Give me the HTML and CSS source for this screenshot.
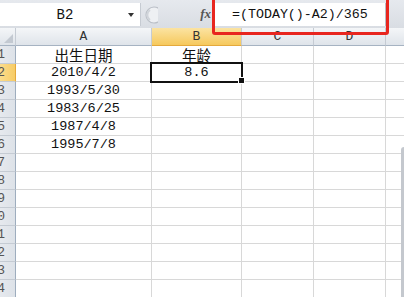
FILE: index.html
```html
<!DOCTYPE html>
<html>
<head>
<meta charset="UTF-8">
<title>年龄计算</title>
<link rel="stylesheet" href="styles.css">
</head>
<body>
<div class="app">
	<div class="fbar">
		<div class="namebox">
			<span class="ref">B2</span>
			<span class="dd"></span>
		</div>
		<div class="tools">
			<svg class="knob" width="14" height="20" viewBox="0 0 14 20">
				<circle cx="10" cy="10" r="8" fill="#eef0f3" stroke="#b9bec6" stroke-width="1.2"/>
				<path d="M6 5 A6 6 0 0 0 6 15" fill="none" stroke="#d0d4da" stroke-width="2"/>
			</svg>
			<span class="fx">fx</span>
		</div>
		<div class="finput">=(TODAY()-A2)/365</div>
		<div class="fend"></div>
	</div>

	<div class="sheet">
		<div class="corner"></div>
		<div class="ch">A</div>
		<div class="ch sel">B</div>
		<div class="ch">C</div>
		<div class="ch">D</div>
		<div class="ch last"></div>

		<div class="rh">1</div><div class="c cjk">出生日期</div><div class="c cjk">年龄</div><div class="c"></div><div class="c"></div><div class="c last"></div>
		<div class="rh sel">2</div><div class="c">2010/4/2</div><div class="c active">8.6<span class="handle"></span></div><div class="c"></div><div class="c"></div><div class="c last"></div>
		<div class="rh">3</div><div class="c">1993/5/30</div><div class="c"></div><div class="c"></div><div class="c"></div><div class="c last"></div>
		<div class="rh">4</div><div class="c">1983/6/25</div><div class="c"></div><div class="c"></div><div class="c"></div><div class="c last"></div>
		<div class="rh">5</div><div class="c">1987/4/8</div><div class="c"></div><div class="c"></div><div class="c"></div><div class="c last"></div>
		<div class="rh">6</div><div class="c">1995/7/8</div><div class="c"></div><div class="c"></div><div class="c"></div><div class="c last"></div>
		<div class="rh">7</div><div class="c"></div><div class="c"></div><div class="c"></div><div class="c"></div><div class="c last"></div>
		<div class="rh">8</div><div class="c"></div><div class="c"></div><div class="c"></div><div class="c"></div><div class="c last"></div>
		<div class="rh">9</div><div class="c"></div><div class="c"></div><div class="c"></div><div class="c"></div><div class="c last"></div>
		<div class="rh">10</div><div class="c"></div><div class="c"></div><div class="c"></div><div class="c"></div><div class="c last"></div>
		<div class="rh">11</div><div class="c"></div><div class="c"></div><div class="c"></div><div class="c"></div><div class="c last"></div>
		<div class="rh">12</div><div class="c"></div><div class="c"></div><div class="c"></div><div class="c"></div><div class="c last"></div>
		<div class="rh">13</div><div class="c"></div><div class="c"></div><div class="c"></div><div class="c"></div><div class="c last"></div>
		<div class="rh">14</div><div class="c"></div><div class="c"></div><div class="c"></div><div class="c"></div><div class="c last"></div>
	</div>

	<div class="callout"></div>
	<div class="vscroll"></div>
</div>
</body>
</html>
```

FILE: styles.css
```css
html, body{
	margin:0;
	padding:0;
	background:#fff;
	overflow:hidden;
}

.app{
	position:relative;
	width:404px;
	height:297px;
	overflow:hidden;
	font:13.5px "Liberation Mono", "DejaVu Sans Mono", monospace;
	color:#111;
}

/* barre de formule */
.fbar{
	display:flex;
	height:28px;
	box-sizing:border-box;
	padding:3px 0 2px 0;
	background:linear-gradient(to bottom, #e6e9ee, #d9dde3);
}

.namebox{
	width:141px;
	display:flex;
	align-items:center;
	background:#fff;
	box-sizing:border-box;
	border-right:1px solid #c6cbd2;
}
.namebox .ref{
	flex:1;
	text-align:center;
	padding-left:2px;
	font:14px "Liberation Mono", monospace;
	color:#111;
}
.namebox .dd{
	width:0;
	height:0;
	margin-right:6px;
	border-left:3.5px solid transparent;
	border-right:3.5px solid transparent;
	border-top:4px solid #333;
}

.tools{
	width:74px;
	display:flex;
	align-items:center;
	justify-content:space-between;
	padding:0 4px 0 3px;
	box-sizing:border-box;
}
.knob{
	display:block;
}
.fx{
	font:italic bold 13px "Liberation Serif", serif;
	color:#555;
	padding-bottom:1px;
}

.finput{
	width:171px;
	background:#fff;
	box-sizing:border-box;
	padding-left:17px;
	line-height:23px;
	font-size:13.3px;
	color:#111;
	border-right:1px solid #b8bec6;
}
.fend{
	flex:1;
}

/* feuille */
.sheet{
	display:grid;
	grid-template-columns:16px 136px 90px 72px 72px 1fr;
	grid-auto-rows:18px;
}

.corner, .ch{
	box-sizing:border-box;
	border-right:1px solid #c5cbd3;
	border-bottom:1px solid #a6b3c2;
	background:linear-gradient(to bottom, #f4f6f8, #dfe4ea);
}
.corner{
	position:relative;
}
.corner::after{
	content:"";
	position:absolute;
	right:2px;
	bottom:2px;
	border-left:9px solid transparent;
	border-bottom:9px solid #c3c9d1;
}
.ch{
	text-align:center;
	font-size:13px;
	line-height:18px;
	color:#333;
}
.ch.sel{
	background:linear-gradient(to bottom, #fbe3a2, #f6c95d);
	border-bottom-color:#e4a93c;
}
.ch.last, .c.last{
	border-right:none;
}

.rh{
	box-sizing:border-box;
	border-right:1px solid #9eadbe;
	border-bottom:1px solid #c5cbd3;
	background:linear-gradient(to right, #e6e9ee, #dde2e8);
	text-align:right;
	padding-right:10px;
	font-size:13px;
	line-height:18px;
	color:#555;
	overflow:hidden;
	white-space:nowrap;
	direction:rtl;
}
.rh.sel{
	background:linear-gradient(to right, #fbdc8c, #f7cc66);
	border-right-color:#e4a93c;
}

.c{
	box-sizing:border-box;
	border-right:1px solid #d8d8d8;
	border-bottom:1px solid #d8d8d8;
	text-align:center;
	line-height:18px;
	white-space:nowrap;
}
.c.cjk{
	font:14.5px "Noto Sans CJK SC", sans-serif;
	line-height:17px;
}
.c.active{
	position:relative;
	outline:2px solid #111;
	outline-offset:-1px;
	margin:-1px 0 0 -1px;
	padding-left:1px;
	padding-top:1px;
	z-index:1;
}
.handle{
	position:absolute;
	right:-4px;
	bottom:-3px;
	width:5px;
	height:5px;
	background:#111;
	border:1px solid #fff;
}

/* annotation */
.callout{
	position:absolute;
	left:212px;
	top:-3px;
	width:177px;
	height:38px;
	box-sizing:border-box;
	border:3px solid #e8261f;
	border-radius:3px;
	z-index:5;
}

.vscroll{
	position:absolute;
	left:401px;
	top:147px;
	width:3px;
	bottom:0;
	background:#c4c8ce;
	border-radius:3px 0 0 0;
}
```
